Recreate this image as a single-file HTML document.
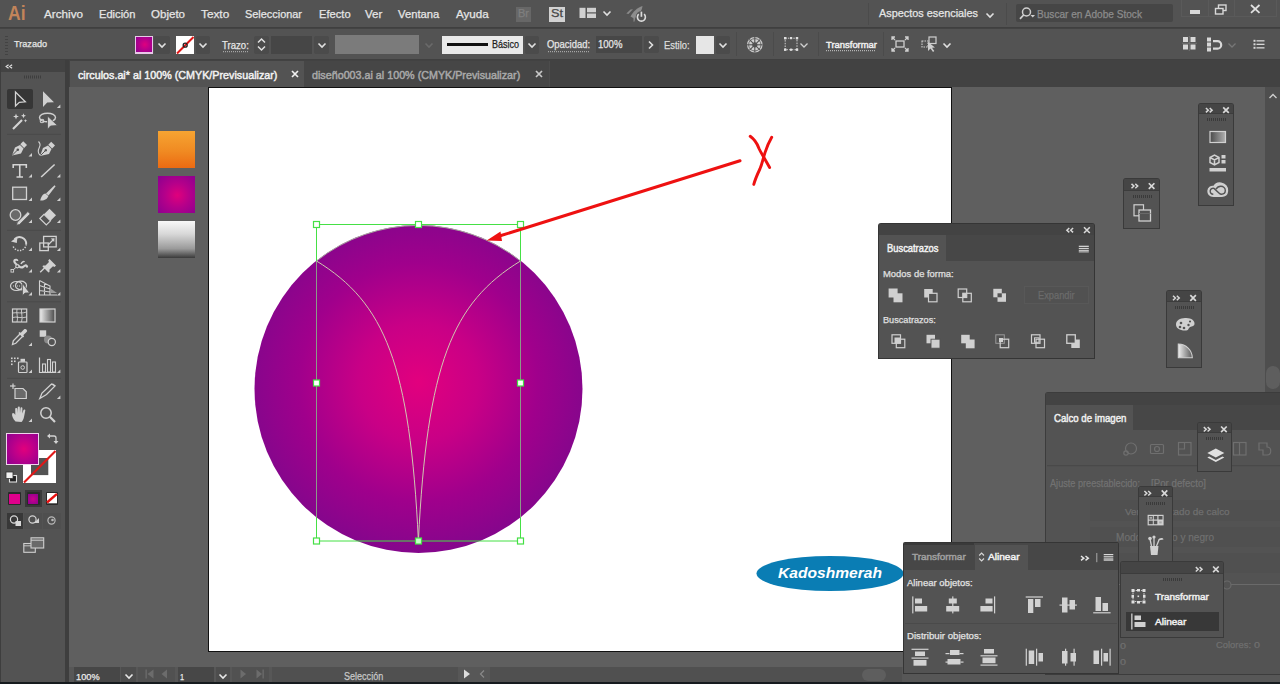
<!DOCTYPE html><html><head><meta charset="utf-8"><style>
html,body{margin:0;padding:0;width:1280px;height:684px;overflow:hidden;background:#5f5f5f;position:relative}
body{font-family:"Liberation Sans",sans-serif}
svg{position:absolute;overflow:visible}
</style></head><body>
<div style="position:absolute;left:0px;top:0px;width:1280px;height:28px;background:#535353;"></div>
<div style="position:absolute;left:0px;top:27px;width:1280px;height:1px;background:#3f3f3f;"></div>
<div style="position:absolute;left:0px;top:28px;width:1280px;height:32px;background:#535353;"></div>
<div style="position:absolute;left:0px;top:28px;width:1280px;height:1px;background:#434343;"></div>
<div style="position:absolute;left:0px;top:59px;width:1280px;height:1px;background:#404040;"></div>
<div style="position:absolute;left:0px;top:60px;width:69px;height:624px;background:#3e3e3e;"></div>
<div style="position:absolute;left:1px;top:60px;width:64px;height:622px;background:#535353;"></div>
<div style="position:absolute;left:1px;top:60px;width:64px;height:12px;background:#434343;"></div>
<div style="position:absolute;left:69px;top:60px;width:1211px;height:27px;background:#424242;"></div>
<div style="position:absolute;left:70px;top:61px;width:234px;height:26px;background:#535353;"></div>
<div style="position:absolute;left:304px;top:61px;width:245px;height:26px;background:#464646;"></div>
<div style="position:absolute;left:549px;top:61px;width:1px;height:26px;background:#4c4c4c;"></div>
<div style="position:absolute;left:69px;top:87px;width:1197px;height:580px;background:#5f5f5f;"></div>
<div style="position:absolute;left:1265px;top:87px;width:15px;height:580px;background:#4e4e4e;"></div>
<div style="position:absolute;left:1266px;top:365.8px;width:14px;height:23px;background:#5e5e5e;border-radius:7px"></div>
<svg style="left:1268px;top:93px;" width="10" height="7" viewBox="0 0 10 7"><polyline points="1.5,5 5,1.5 8.5,5" fill="none" stroke="#cfcfcf" stroke-width="1.3"/></svg>
<div style="position:absolute;left:208px;top:87px;width:744px;height:565px;background:#111111;"></div>
<div style="position:absolute;left:209px;top:88px;width:742px;height:563px;background:#ffffff;"></div>
<div style="position:absolute;left:69px;top:667px;width:1211px;height:15px;background:#575757;"></div>
<div style="position:absolute;left:0px;top:682px;width:1280px;height:2px;background:#161b1e;"></div>
<div style="position:absolute;left:43.50px;top:8.43px;font:normal normal 11.660px/1 'Liberation Sans', sans-serif;color:#e6e6e6;white-space:nowrap;-webkit-text-stroke:0.25px currentColor;transform:scaleX(1.0034);transform-origin:0 0;">Archivo</div>
<div style="position:absolute;left:98.50px;top:8.43px;font:normal normal 11.660px/1 'Liberation Sans', sans-serif;color:#e6e6e6;white-space:nowrap;-webkit-text-stroke:0.25px currentColor;transform:scaleX(0.9547);transform-origin:0 0;">Edición</div>
<div style="position:absolute;left:150.90px;top:8.43px;font:normal normal 11.660px/1 'Liberation Sans', sans-serif;color:#e6e6e6;white-space:nowrap;-webkit-text-stroke:0.25px currentColor;transform:scaleX(0.9900);transform-origin:0 0;">Objeto</div>
<div style="position:absolute;left:201.30px;top:8.43px;font:normal normal 11.660px/1 'Liberation Sans', sans-serif;color:#e6e6e6;white-space:nowrap;-webkit-text-stroke:0.25px currentColor;transform:scaleX(1.0122);transform-origin:0 0;">Texto</div>
<div style="position:absolute;left:245.40px;top:8.43px;font:normal normal 11.660px/1 'Liberation Sans', sans-serif;color:#e6e6e6;white-space:nowrap;-webkit-text-stroke:0.25px currentColor;transform:scaleX(0.9359);transform-origin:0 0;">Seleccionar</div>
<div style="position:absolute;left:318.90px;top:8.43px;font:normal normal 11.660px/1 'Liberation Sans', sans-serif;color:#e6e6e6;white-space:nowrap;-webkit-text-stroke:0.25px currentColor;transform:scaleX(0.9563);transform-origin:0 0;">Efecto</div>
<div style="position:absolute;left:365.30px;top:8.43px;font:normal normal 11.660px/1 'Liberation Sans', sans-serif;color:#e6e6e6;white-space:nowrap;-webkit-text-stroke:0.25px currentColor;transform:scaleX(0.9831);transform-origin:0 0;">Ver</div>
<div style="position:absolute;left:398.20px;top:8.43px;font:normal normal 11.660px/1 'Liberation Sans', sans-serif;color:#e6e6e6;white-space:nowrap;-webkit-text-stroke:0.25px currentColor;transform:scaleX(0.9653);transform-origin:0 0;">Ventana</div>
<div style="position:absolute;left:455.50px;top:8.43px;font:normal normal 11.660px/1 'Liberation Sans', sans-serif;color:#e6e6e6;white-space:nowrap;-webkit-text-stroke:0.25px currentColor;transform:scaleX(0.9957);transform-origin:0 0;">Ayuda</div>
<div style="position:absolute;left:7.50px;top:2.78px;font:normal bold 20.576px/1 'Liberation Sans', sans-serif;color:#c2845a;white-space:nowrap;transform:scaleX(0.8511);transform-origin:0 0;">Ai</div>
<div style="position:absolute;left:515.6px;top:6.5px;width:15.5px;height:15px;background:#676767;"></div>
<div style="position:absolute;left:517.80px;top:9.09px;font:normal normal 10.288px/1 'Liberation Sans', sans-serif;color:#7f7f7f;white-space:nowrap;-webkit-text-stroke:0.25px currentColor;transform:scaleX(1.0715);transform-origin:0 0;">Br</div>
<div style="position:absolute;left:549px;top:6.5px;width:16px;height:15px;background:#d2d2d2;"></div>
<div style="position:absolute;left:551.00px;top:9.09px;font:normal normal 10.288px/1 'Liberation Sans', sans-serif;color:#484848;white-space:nowrap;-webkit-text-stroke:0.25px currentColor;transform:scaleX(1.2372);transform-origin:0 0;">St</div>
<svg style="left:579px;top:7px;" width="18" height="12" viewBox="0 0 18 12"><rect x="0.5" y="0.8" width="6" height="10.2" fill="#d0d0d0"/><rect x="8" y="0.8" width="9" height="4.5" fill="#d0d0d0"/><rect x="8" y="6.5" width="9" height="4.5" fill="#d0d0d0"/></svg>
<svg style="left:602px;top:10px;" width="10" height="7" viewBox="0 0 10 7"><polyline points="1.5,1.5 5,5 8.5,1.5" fill="none" stroke="#e0e0e0" stroke-width="1.6"/></svg>
<svg style="left:620px;top:2px;" width="32" height="24" viewBox="0 0 32 24"><path d="M10.5,14.5 C13,10 17,5.5 22.5,4 C22,9 18.5,13.5 14,16.5Z" fill="#8c8c8c"/><path d="M6.3,11.6 L10.5,7.5 L13,7.3 L8.5,12Z" fill="#8a8a8a"/><path d="M13.5,15.5 L15.5,14.5 L14.5,19.5 L13.5,19.8Z" fill="#8a8a8a"/><circle cx="21.4" cy="14.7" r="5.6" fill="#535353"/><path d="M18.7,12.2 A4,4 0 1 0 24.1,12.2" fill="none" stroke="#dcdcdc" stroke-width="1.6"/><line x1="21.4" y1="9.6" x2="21.4" y2="14.8" stroke="#dcdcdc" stroke-width="1.7"/></svg>
<div style="position:absolute;left:868px;top:3px;width:1px;height:22px;background:#4b4b4b;"></div>
<div style="position:absolute;left:1006px;top:3px;width:1px;height:22px;background:#4b4b4b;"></div>
<div style="position:absolute;left:878.90px;top:7.96px;font:normal normal 11.385px/1 'Liberation Sans', sans-serif;color:#e6e6e6;white-space:nowrap;-webkit-text-stroke:0.25px currentColor;transform:scaleX(0.9547);transform-origin:0 0;">Aspectos esenciales</div>
<svg style="left:985px;top:12px;" width="10" height="7" viewBox="0 0 10 7"><polyline points="1.5,1.5 5,5 8.5,1.5" fill="none" stroke="#e0e0e0" stroke-width="1.6"/></svg>
<div style="position:absolute;left:1016px;top:4.3px;width:157px;height:18px;background:#464646;border-radius:2px"></div>
<svg style="left:1018px;top:6px;" width="18" height="14" viewBox="0 0 18 14"><circle cx="8.5" cy="6" r="4" fill="none" stroke="#d0d0d0" stroke-width="1.5"/><line x1="5.6" y1="9" x2="2" y2="12.8" stroke="#d0d0d0" stroke-width="1.8"/><polygon points="12.5,9 17,9 14.75,11.5" fill="#d0d0d0"/></svg>
<div style="position:absolute;left:1036.50px;top:8.51px;font:normal normal 10.974px/1 'Liberation Sans', sans-serif;color:#8c8c8c;white-space:nowrap;-webkit-text-stroke:0.25px currentColor;transform:scaleX(0.9203);transform-origin:0 0;">Buscar en Adobe Stock</div>
<div style="position:absolute;left:1181px;top:0px;width:96px;height:17px;background:#5a5a5a;"></div>
<div style="position:absolute;left:1182px;top:0px;width:94px;height:16px;background:#535353;"></div>
<div style="position:absolute;left:1208px;top:0px;width:1px;height:17px;background:#5a5a5a;"></div>
<div style="position:absolute;left:1234px;top:0px;width:1px;height:17px;background:#5a5a5a;"></div>
<div style="position:absolute;left:1190px;top:10.3px;width:9.5px;height:3.4px;background:#d8d8d8;"></div>
<svg style="left:1214px;top:4px;" width="14" height="11" viewBox="0 0 14 11"><rect x="4.5" y="1" width="7.5" height="5.5" fill="none" stroke="#d8d8d8" stroke-width="1.4"/><rect x="1.5" y="4.5" width="7.5" height="5.5" fill="#4f4f4f" stroke="#d8d8d8" stroke-width="1.4"/></svg>
<svg style="left:1250px;top:4px;" width="11" height="10" viewBox="0 0 11 10"><path d="M1,1 L9.5,8.8 M9.5,1 L1,8.8" stroke="#e0e0e0" stroke-width="1.8"/></svg>
<div style="position:absolute;left:5px;top:36px;width:2.5px;height:1.3px;background:#434343;"></div>
<div style="position:absolute;left:5px;top:39px;width:2.5px;height:1.3px;background:#434343;"></div>
<div style="position:absolute;left:5px;top:42px;width:2.5px;height:1.3px;background:#434343;"></div>
<div style="position:absolute;left:5px;top:45px;width:2.5px;height:1.3px;background:#434343;"></div>
<div style="position:absolute;left:5px;top:48px;width:2.5px;height:1.3px;background:#434343;"></div>
<div style="position:absolute;left:5px;top:51px;width:2.5px;height:1.3px;background:#434343;"></div>
<div style="position:absolute;left:5px;top:54px;width:2.5px;height:1.3px;background:#434343;"></div>
<div style="position:absolute;left:13.50px;top:39.06px;font:normal normal 9.739px/1 'Liberation Sans', sans-serif;color:#e6e6e6;white-space:nowrap;-webkit-text-stroke:0.25px currentColor;transform:scaleX(0.9407);transform-origin:0 0;">Trazado</div>
<div style="position:absolute;left:134.6px;top:35.5px;width:18.6px;height:18.3px;background:#e8c8e8;"></div>
<div style="position:absolute;left:136px;top:37px;width:15.8px;height:15.3px;background:radial-gradient(circle at 55% 50%, #e0007e 0%, #b8008a 45%, #90008f 100%);"></div>
<div style="position:absolute;left:154.4px;top:35.5px;width:15.4px;height:18.3px;background:#4b4b4b;border-radius:2px"></div>
<svg style="left:157px;top:42px;" width="10" height="7" viewBox="0 0 10 7"><polyline points="1.5,1.5 5,5 8.5,1.5" fill="none" stroke="#e0e0e0" stroke-width="1.6"/></svg>
<div style="position:absolute;left:175.8px;top:35.5px;width:18.4px;height:18.3px;background:#ffffff;"></div>
<svg style="left:175.8px;top:35.5px;" width="18.4" height="18.3" viewBox="0 0 18.4 18.3"><line x1="1" y1="17.5" x2="17.5" y2="1" stroke="#e01818" stroke-width="2"/><circle cx="9.2" cy="9.2" r="2" fill="none" stroke="#222" stroke-width="1.3"/></svg>
<div style="position:absolute;left:195.6px;top:35.5px;width:14.6px;height:18.3px;background:#4b4b4b;border-radius:2px"></div>
<svg style="left:198px;top:42px;" width="10" height="7" viewBox="0 0 10 7"><polyline points="1.5,1.5 5,5 8.5,1.5" fill="none" stroke="#e0e0e0" stroke-width="1.6"/></svg>
<div style="position:absolute;left:222.20px;top:40.61px;font:normal normal 10.151px/1 'Liberation Sans', sans-serif;color:#e6e6e6;white-space:nowrap;-webkit-text-stroke:0.25px currentColor;transform:scaleX(0.9449);transform-origin:0 0;">Trazo:</div>
<svg style="left:222.7px;top:51px;" width="26" height="2" viewBox="0 0 26 2"><line x1="0" y1="0.7" x2="26" y2="0.7" stroke="#bbbbbb" stroke-width="1" stroke-dasharray="1,1"/></svg>
<div style="position:absolute;left:254px;top:35.5px;width:15px;height:18.3px;background:#4b4b4b;border-radius:2px"></div>
<svg style="left:256px;top:37px;" width="11" height="15" viewBox="0 0 11 15"><polyline points="2,5.5 5.5,2 9,5.5" fill="none" stroke="#e0e0e0" stroke-width="1.5"/><polyline points="2,9.5 5.5,13 9,9.5" fill="none" stroke="#e0e0e0" stroke-width="1.5"/></svg>
<div style="position:absolute;left:270.9px;top:35.5px;width:41px;height:18.3px;background:#464646;"></div>
<div style="position:absolute;left:313.8px;top:35.5px;width:15px;height:18.3px;background:#4b4b4b;border-radius:2px"></div>
<svg style="left:316.5px;top:42px;" width="10" height="7" viewBox="0 0 10 7"><polyline points="1.5,1.5 5,5 8.5,1.5" fill="none" stroke="#e0e0e0" stroke-width="1.6"/></svg>
<div style="position:absolute;left:335px;top:35px;width:84px;height:19.4px;background:#7b7b7b;"></div>
<svg style="left:424px;top:42px;" width="10" height="7" viewBox="0 0 10 7"><polyline points="1.5,1.5 5,5 8.5,1.5" fill="none" stroke="#6a6a6a" stroke-width="1.6"/></svg>
<div style="position:absolute;left:442.3px;top:35.9px;width:81px;height:18px;background:#e9e9e9;"></div>
<div style="position:absolute;left:446.8px;top:43.2px;width:41.7px;height:3px;background:#111111;"></div>
<div style="position:absolute;left:492.10px;top:39.05px;font:normal normal 11.523px/1 'Liberation Sans', sans-serif;color:#1c1c1c;white-space:nowrap;-webkit-text-stroke:0.25px currentColor;transform:scaleX(0.7812);transform-origin:0 0;">Básico</div>
<div style="position:absolute;left:525px;top:35.5px;width:14.3px;height:18.3px;background:#4b4b4b;border-radius:2px"></div>
<svg style="left:527px;top:42px;" width="10" height="7" viewBox="0 0 10 7"><polyline points="1.5,1.5 5,5 8.5,1.5" fill="none" stroke="#e0e0e0" stroke-width="1.6"/></svg>
<div style="position:absolute;left:547.00px;top:39.21px;font:normal normal 10.974px/1 'Liberation Sans', sans-serif;color:#e6e6e6;white-space:nowrap;-webkit-text-stroke:0.25px currentColor;transform:scaleX(0.8600);transform-origin:0 0;">Opacidad:</div>
<svg style="left:547.5px;top:50.5px;" width="42" height="2" viewBox="0 0 42 2"><line x1="0" y1="0.7" x2="42" y2="0.7" stroke="#bbbbbb" stroke-width="1" stroke-dasharray="1,1"/></svg>
<div style="position:absolute;left:596px;top:36px;width:46px;height:17px;background:#474747;"></div>
<div style="position:absolute;left:597.90px;top:39.21px;font:normal normal 10.974px/1 'Liberation Sans', sans-serif;color:#e8e8e8;white-space:nowrap;-webkit-text-stroke:0.25px currentColor;transform:scaleX(0.8698);transform-origin:0 0;">100%</div>
<div style="position:absolute;left:644.2px;top:36px;width:14.4px;height:17px;background:#4b4b4b;border-radius:2px"></div>
<svg style="left:647px;top:40px;" width="8" height="10" viewBox="0 0 8 10"><polyline points="2,1.5 5.5,5 2,8.5" fill="none" stroke="#e0e0e0" stroke-width="1.6"/></svg>
<div style="position:absolute;left:664.40px;top:39.74px;font:normal normal 10.700px/1 'Liberation Sans', sans-serif;color:#dcdcdc;white-space:nowrap;-webkit-text-stroke:0.25px currentColor;transform:scaleX(0.8796);transform-origin:0 0;">Estilo:</div>
<div style="position:absolute;left:696px;top:35.9px;width:18px;height:18px;background:#e6e6e6;"></div>
<div style="position:absolute;left:715.7px;top:35.5px;width:14px;height:18.3px;background:#4b4b4b;border-radius:2px"></div>
<svg style="left:718px;top:42px;" width="10" height="7" viewBox="0 0 10 7"><polyline points="1.5,1.5 5,5 8.5,1.5" fill="none" stroke="#e0e0e0" stroke-width="1.6"/></svg>
<div style="position:absolute;left:736px;top:32px;width:1px;height:24px;background:#4b4b4b;"></div>
<svg style="left:746px;top:36px;" width="18" height="18" viewBox="0 0 18 18"><circle cx="8.8" cy="8.8" r="7.8" fill="#cfcfcf"/><circle cx="8.8" cy="8.8" r="2.6" fill="#535353"/><g stroke="#535353" stroke-width="1.1"><line x1="8.8" y1="1" x2="8.8" y2="16.6"/><line x1="1" y1="8.8" x2="16.6" y2="8.8"/><line x1="3.3" y1="3.3" x2="14.3" y2="14.3"/><line x1="14.3" y1="3.3" x2="3.3" y2="14.3"/></g><circle cx="8.8" cy="8.8" r="6.2" fill="none" stroke="#535353" stroke-width="0.8"/></svg>
<div style="position:absolute;left:772.6px;top:32px;width:1px;height:24px;background:#4b4b4b;"></div>
<svg style="left:784px;top:37px;" width="15" height="14" viewBox="0 0 15 14"><rect x="1.2" y="1.2" width="11.8" height="11.5" fill="none" stroke="#d0d0d0" stroke-width="1" stroke-dasharray="1.5,1.2"/><g fill="#e0e0e0"><rect x="0" y="0" width="2.4" height="2.4"/><rect x="11.8" y="0" width="2.4" height="2.4"/><rect x="0" y="11.5" width="2.4" height="2.4"/><rect x="11.8" y="11.5" width="2.4" height="2.4"/><rect x="6" y="0" width="2.2" height="2.2"/><rect x="6" y="11.6" width="2.2" height="2.2"/></g></svg>
<svg style="left:799px;top:42px;" width="10" height="7" viewBox="0 0 10 7"><polyline points="1.5,1.5 5,5 8.5,1.5" fill="none" stroke="#d0d0d0" stroke-width="1.3"/></svg>
<div style="position:absolute;left:817.5px;top:32px;width:1px;height:24px;background:#4b4b4b;"></div>
<div style="position:absolute;left:825.50px;top:40.14px;font:normal normal 9.877px/1 'Liberation Sans', sans-serif;color:#f0f0f0;white-space:nowrap;-webkit-text-stroke:0.45px currentColor;transform:scaleX(0.9565);transform-origin:0 0;">Transformar</div>
<svg style="left:826px;top:50px;" width="50" height="2" viewBox="0 0 50 2"><line x1="0" y1="0.7" x2="50" y2="0.7" stroke="#cccccc" stroke-width="1" stroke-dasharray="1,1"/></svg>
<div style="position:absolute;left:883px;top:32px;width:1px;height:24px;background:#4b4b4b;"></div>
<svg style="left:891px;top:36px;" width="18" height="16" viewBox="0 0 18 16"><rect x="5" y="5" width="8" height="6" fill="none" stroke="#d0d0d0" stroke-width="1.3"/><g stroke="#d0d0d0" stroke-width="1.3" fill="none"><path d="M1,1 L4,4 M1,4 L1,1 L4,1"/><path d="M17,1 L14,4 M17,4 L17,1 L14,1"/><path d="M1,15 L4,12 M1,12 L1,15 L4,15"/><path d="M17,15 L14,12 M17,12 L17,15 L14,15"/></g></svg>
<svg style="left:921px;top:36px;" width="18" height="16" viewBox="0 0 18 16"><rect x="1" y="5" width="6" height="6" fill="none" stroke="#cfcfcf" stroke-width="1.1" stroke-dasharray="1.5,1"/><rect x="8" y="1" width="7" height="6.5" fill="none" stroke="#cfcfcf" stroke-width="1.2"/><path d="M7,6 L7,15 L9.5,12.5 L12,16 L13.3,15 L11,11.7 L14,11.5 Z" fill="#cfcfcf"/></svg>
<svg style="left:942px;top:42px;" width="10" height="7" viewBox="0 0 10 7"><polyline points="1.5,1.5 5,5 8.5,1.5" fill="none" stroke="#e0e0e0" stroke-width="1.6"/></svg>
<svg style="left:1182px;top:36px;" width="15" height="15" viewBox="0 0 15 15"><g fill="#d8d8d8"><rect x="1" y="1" width="5" height="5"/><rect x="8.5" y="1" width="5" height="5"/><rect x="1" y="8.5" width="5" height="5"/><rect x="8.5" y="8.5" width="5" height="5"/></g><line x1="7.25" y1="0" x2="7.25" y2="15" stroke="#7a7a7a" stroke-width="0.8"/><line x1="0" y1="7.25" x2="15" y2="7.25" stroke="#7a7a7a" stroke-width="0.8"/></svg>
<svg style="left:1206px;top:37px;" width="17" height="15" viewBox="0 0 17 15"><g fill="#d8d8d8"><rect x="1" y="0.5" width="4" height="4"/><rect x="1" y="5.5" width="4" height="4"/><rect x="1" y="10.5" width="4" height="4"/></g><path d="M7,4.2 L11.5,4.2 A3.7,3.7 0 0 1 11.5,11.6 L7,11.6" fill="none" stroke="#d8d8d8" stroke-width="2.2"/></svg>
<svg style="left:1227px;top:42px;" width="10" height="7" viewBox="0 0 10 7"><polyline points="1.5,1.5 5,5 8.5,1.5" fill="none" stroke="#777777" stroke-width="1.3"/></svg>
<svg style="left:1253px;top:39px;" width="12" height="11" viewBox="0 0 12 11"><g fill="#d8d8d8"><rect x="0.5" y="0.8" width="2" height="2"/><rect x="0.5" y="4.3" width="2" height="2"/><rect x="0.5" y="7.8" width="2" height="2"/><rect x="3.5" y="1.2" width="8" height="1.3"/><rect x="3.5" y="4.7" width="8" height="1.3"/><rect x="3.5" y="8.2" width="8" height="1.3"/></g></svg>
<div style="position:absolute;left:77.50px;top:70.06px;font:normal normal 10.562px/1 'Liberation Sans', sans-serif;color:#f2f2f2;white-space:nowrap;-webkit-text-stroke:0.45px currentColor;transform:scaleX(1.0186);transform-origin:0 0;">circulos.ai* al 100% (CMYK/Previsualizar)</div>
<svg style="left:290.5px;top:69.5px;" width="8" height="8" viewBox="0 0 8 8"><path d="M1,1 L7,7 M7,1 L1,7" stroke="#f0f0f0" stroke-width="1.7"/></svg>
<div style="position:absolute;left:312.30px;top:70.06px;font:normal normal 10.562px/1 'Liberation Sans', sans-serif;color:#a9a9a9;white-space:nowrap;-webkit-text-stroke:0.45px currentColor;transform:scaleX(1.0177);transform-origin:0 0;">diseño003.ai al 100% (CMYK/Previsualizar)</div>
<svg style="left:534.5px;top:69.5px;" width="8" height="8" viewBox="0 0 8 8"><path d="M1,1 L7,7 M7,1 L1,7" stroke="#c8c8c8" stroke-width="1.7"/></svg>
<div style="position:absolute;left:5.10px;top:64.14px;font:normal normal 4.801px/1 'Liberation Sans', sans-serif;color:#ccc;white-space:nowrap;-webkit-text-stroke:0.25px currentColor;"></div>
<svg style="left:0px;top:0px;" width="69" height="684" viewBox="0 0 69 684">
<path d="M8.6,64.8 L6.2,66.5 L8.6,68.2 M12.1,64.8 L9.7,66.5 L12.1,68.2" fill="none" stroke="#e0e0e0" stroke-width="1.2"/>
<g fill="#3e3e3e"><rect x="24" y="75.5" width="1" height="3"/><rect x="26" y="75.5" width="1" height="3"/><rect x="28" y="75.5" width="1" height="3"/><rect x="30" y="75.5" width="1" height="3"/><rect x="32" y="75.5" width="1" height="3"/><rect x="34" y="75.5" width="1" height="3"/><rect x="36" y="75.5" width="1" height="3"/><rect x="38" y="75.5" width="1" height="3"/><rect x="40" y="75.5" width="1" height="3"/></g>
</svg>
<div style="position:absolute;left:7px;top:88.5px;width:25.8px;height:20.2px;background:#363636;border-radius:2px"></div>
<svg style="left:0px;top:0px;" width="69" height="684" viewBox="0 0 69 684"><g fill="#cfcfcf"><polygon points="32,153.0 32,156.5 28.5,156.5"/><polygon points="32,174.0 32,177.5 28.5,177.5"/><polygon points="32,197.5 32,201 28.5,201"/><polygon points="32,219.5 32,223 28.5,223"/><polygon points="32,247.5 32,251 28.5,251"/><polygon points="32,269.0 32,272.5 28.5,272.5"/><polygon points="32,292.0 32,295.5 28.5,295.5"/><polygon points="32,342.5 32,346 28.5,346"/><polygon points="32,369.5 32,373 28.5,373"/><polygon points="32,418.5 32,422 28.5,422"/><polygon points="60.4,104.5 60.4,108 56.9,108"/><polygon points="60.4,174.0 60.4,177.5 56.9,177.5"/><polygon points="60.4,197.5 60.4,201 56.9,201"/><polygon points="60.4,219.5 60.4,223 56.9,223"/><polygon points="60.4,247.5 60.4,251 56.9,251"/><polygon points="60.4,269.0 60.4,272.5 56.9,272.5"/><polygon points="60.4,292.0 60.4,295.5 56.9,295.5"/><polygon points="60.4,369.5 60.4,373 56.9,373"/><polygon points="60.4,395.5 60.4,399 56.9,399"/></g><rect x="7" y="133.9" width="54" height="1" fill="#4b4b4b"/><rect x="7" y="229.9" width="54" height="1" fill="#4b4b4b"/><rect x="7" y="301.3" width="54" height="1" fill="#4b4b4b"/><rect x="7" y="377.9" width="54" height="1" fill="#4b4b4b"/>
<polygon points="15.5,92 15.5,106 19.3,102.3 25.3,101.8" fill="none" stroke="#d4d4d4" stroke-width="1.3" stroke-linejoin="miter"/>
<polygon points="43,91.3 43,107 47.2,102.6 54,102.3" fill="#d0d0d0"/>
<g stroke="#d4d4d4" fill="none">
 <line x1="13" y1="129" x2="22" y2="120" stroke-width="2.2"/>
</g>
<g fill="#d4d4d4">
 <path d="M16,113.5 L16.8,115.7 L19,116.5 L16.8,117.3 L16,119.5 L15.2,117.3 L13,116.5 L15.2,115.7Z"/>
 <path d="M23.5,113.2 L24.2,115 L26,115.7 L24.2,116.4 L23.5,118.2 L22.8,116.4 L21,115.7 L22.8,115Z"/>
 <path d="M25.5,119 L26,120.3 L27.3,120.8 L26,121.3 L25.5,122.6 L25,121.3 L23.7,120.8 L25,120.3Z"/>
</g>
<ellipse cx="47.5" cy="117.5" rx="8" ry="4.3" fill="none" stroke="#d0d0d0" stroke-width="1.4"/>
<circle cx="42" cy="121" r="1.8" fill="none" stroke="#d0d0d0" stroke-width="1.1"/>
<polygon points="47.5,116 47.5,129.5 50.5,126 57.5,125.5" fill="#d0d0d0" stroke="#535353" stroke-width="0.8"/>
<path d="M12,155.5 L15,147.5 L20,145 L23.5,148.5 L21,153.5 Z" fill="#d2d2d2"/>
<path d="M20.3,144.3 L23.2,141.3 L27,145.1 L24.1,148" fill="#d2d2d2"/>
<line x1="12.3" y1="155.2" x2="17.3" y2="150.2" stroke="#535353" stroke-width="1"/>
<circle cx="17.8" cy="149.7" r="1.3" fill="#535353"/>
<path d="M40,156 L43,148 L48,145.5 L51.5,149 L49,154 Z" fill="#d2d2d2"/><line x1="40.3" y1="155.7" x2="45.3" y2="150.7" stroke="#535353" stroke-width="1"/><circle cx="45.8" cy="150.2" r="1.2" fill="#535353"/>
<path d="M48.3,144.8 L51.2,141.8 L55,145.6 L52.1,148.5Z" fill="#d2d2d2"/>
<path d="M40.5,155.5 C37,153 38.5,149 39.5,147 C40.5,145 39.5,142.5 38.5,141.5" fill="none" stroke="#d2d2d2" stroke-width="1.1"/>
<path d="M13.2,168 L13.2,164.8 L26.3,164.8 L26.3,168 M19.75,164.8 L19.75,177 M16.5,177 L23,177" fill="none" stroke="#d4d4d4" stroke-width="1.6"/>
<line x1="41.2" y1="177" x2="54.6" y2="164.5" stroke="#d2d2d2" stroke-width="1.6"/>
<rect x="12.7" y="187.2" width="13.8" height="12.3" fill="#656565" stroke="#d2d2d2" stroke-width="1.3"/>
<path d="M46,193.5 L54.5,185.2 L55.6,186.3 L48.5,195.5Z" fill="#d2d2d2"/>
<path d="M40.2,200.5 C41,197 42.5,194 45.5,193.5 L48.3,196 C47.5,199 44,201 40.2,200.5Z" fill="#d2d2d2"/>
<circle cx="15.5" cy="215" r="5.3" fill="#6a6a6a" stroke="#d2d2d2" stroke-width="1.3"/>
<path d="M17.2,222.2 L27.9,211.5 L30.3,213.9 L19.6,224.6 L16.5,225.2Z" fill="#d2d2d2" stroke="#535353" stroke-width="0.9"/>
<path d="M44,214.3 L49.5,208.8 L56,215.3 L50.5,220.8Z" fill="#d2d2d2"/>
<path d="M44,214.3 L50.5,220.8 L46.3,225 L39.8,218.5Z" fill="none" stroke="#d2d2d2" stroke-width="1.2"/>
<path d="M14.5,239.2 A6.8,6.8 0 0 1 26.2,244.2" fill="none" stroke="#d2d2d2" stroke-width="1.9"/>
<path d="M26.2,244.2 A6.8,6.8 0 0 1 12.8,245.3" fill="none" stroke="#d2d2d2" stroke-width="1.5" stroke-dasharray="1.4,1.3"/>
<polygon points="11,241.5 17.5,236.8 16.8,243" fill="#d2d2d2"/>
<rect x="39.8" y="243" width="8.5" height="7.6" fill="none" stroke="#d2d2d2" stroke-width="1.3"/>
<rect x="43.6" y="236.4" width="12.6" height="10.5" fill="none" stroke="#d2d2d2" stroke-width="1.3"/>
<line x1="48" y1="245" x2="53.5" y2="239.5" stroke="#d2d2d2" stroke-width="1.2"/>
<polygon points="54.5,238.3 50.8,238.6 54.2,242" fill="#d2d2d2"/>
<path d="M14.5,260.5 C13.5,262.5 16,264 18,265.5 C20,267 21,268.5 23,267 C24.5,265.8 25.5,264.5 27,266.5" fill="none" stroke="#d2d2d2" stroke-width="2.2" stroke-linecap="round"/>
<path d="M14.5,260.5 C15.5,259 17.5,259.5 17.5,261" fill="none" stroke="#d2d2d2" stroke-width="1.8"/>
<path d="M21,264 C22,262 23.5,261 24.5,262" fill="none" stroke="#d2d2d2" stroke-width="1.5"/>
<line x1="12.5" y1="270.5" x2="17" y2="266.5" stroke="#d2d2d2" stroke-width="1"/>
<circle cx="17.3" cy="266.3" r="1.6" fill="#535353" stroke="#d2d2d2" stroke-width="1.1"/>
<rect x="11" y="269.5" width="2.6" height="2.6" fill="#535353" stroke="#d2d2d2" stroke-width="0.9"/>
<path d="M49.5,259 L56,265.5 L54.5,267 L53,266.2 L49.5,269.5 L49.5,272 L48.5,272.5 L42.5,266.5 L43,265.5 L45.5,265.5 L49,262 L48.2,260.5Z" fill="#d2d2d2"/>
<line x1="40.2" y1="272.3" x2="45.3" y2="267.3" stroke="#d2d2d2" stroke-width="1.4"/>
<ellipse cx="16.5" cy="286" rx="6" ry="4.5" fill="none" stroke="#d2d2d2" stroke-width="1.2"/>
<ellipse cx="21" cy="285.5" rx="5.5" ry="4.3" fill="none" stroke="#d2d2d2" stroke-width="1.2"/>
<line x1="13" y1="286" x2="21.5" y2="286" stroke="#d2d2d2" stroke-width="1" stroke-dasharray="1,1"/>
<polygon points="22.5,283.5 22.5,295.5 25,293 29.5,292.8" fill="#d2d2d2" stroke="#535353" stroke-width="0.7"/>
<path d="M39.5,280.5 L39.5,295 L57,295 M39.5,280.5 L50,286 L50,295 M39.5,285.5 L50,289 M39.5,290.5 L50,292 M44.5,282.8 L44.5,295" fill="none" stroke="#d2d2d2" stroke-width="1.1"/>
<path d="M50.5,288.5 L57,293 L50.5,293" fill="#9a9a9a"/>
<rect x="12.5" y="309" width="14.2" height="13" fill="none" stroke="#d2d2d2" stroke-width="1.2"/>
<path d="M12.5,313 C17,312 22,314 26.7,312 M12.5,317.5 C17,316 21,319 26.7,317 M17,309 C16,313 18.5,318 17,322 M21.5,309 C21,313 23,317 21.5,322" fill="none" stroke="#d2d2d2" stroke-width="0.9"/>
<defs><linearGradient id="tg" x1="0" x2="1" y1="0" y2="0"><stop offset="0" stop-color="#ececec"/><stop offset="1" stop-color="#4a4a4a"/></linearGradient></defs>
<rect x="40" y="309" width="15" height="13" fill="url(#tg)" stroke="#d2d2d2" stroke-width="1.2"/>
<path d="M12.5,344.5 L13.3,340.8 L20.5,333.5 L23,336 L15.8,343.3Z" fill="none" stroke="#d2d2d2" stroke-width="1.3"/>
<path d="M19.5,334 L24.2,329.3 C25.5,328.2 28,330.5 26.8,331.8 L22,336.5Z" fill="#d2d2d2"/><line x1="19" y1="332.5" x2="23.5" y2="337" stroke="#d2d2d2" stroke-width="1.6"/>
<rect x="39.7" y="330.3" width="6.5" height="6.5" fill="#d2d2d2"/>
<circle cx="48" cy="339.5" r="4" fill="#8a8a8a"/>
<circle cx="51.8" cy="342" r="3.6" fill="#535353" stroke="#d2d2d2" stroke-width="1.2"/>
<g fill="#d2d2d2"><rect x="11" y="357.5" width="1.6" height="1.6"/><rect x="14" y="357.5" width="1.6" height="1.6"/><rect x="17" y="357.5" width="1.6" height="1.6"/><rect x="11" y="360.5" width="1.6" height="1.6"/><rect x="14" y="360.5" width="1.6" height="1.6"/><rect x="11" y="363.5" width="1.6" height="1.6"/></g>
<rect x="18.5" y="362" width="8.5" height="10.5" fill="none" stroke="#d2d2d2" stroke-width="1.2" rx="0.8"/>
<rect x="20.5" y="358.8" width="4.5" height="3" fill="#d2d2d2"/>
<circle cx="22.7" cy="367.5" r="1.8" fill="none" stroke="#d2d2d2" stroke-width="1"/>
<path d="M39.5,357.5 L39.5,372.5 L56.3,372.5" fill="none" stroke="#d2d2d2" stroke-width="1.2"/>
<g fill="none" stroke="#d2d2d2" stroke-width="1.1"><rect x="42.5" y="364" width="3" height="8"/><rect x="47.5" y="359.5" width="3" height="12.5"/><rect x="52.5" y="362" width="3" height="10"/></g>
<line x1="10" y1="386" x2="15.5" y2="386" stroke="#d2d2d2" stroke-width="1.2"/>
<line x1="13" y1="383.5" x2="13" y2="389" stroke="#d2d2d2" stroke-width="1.2"/>
<path d="M15,388.5 L23,388.5 L26.3,391.8 L26.3,398.5 L15,398.5Z" fill="#6a6a6a" stroke="#d2d2d2" stroke-width="1.2"/>
<path d="M39.8,398.5 L42,393 L51.5,384 L55,386 L46.5,394.5Z" fill="none" stroke="#d2d2d2" stroke-width="1.3"/>
<path d="M51.5,384 L53,383.5 L55.5,385.5 L55,386Z" fill="#d2d2d2"/>
<path d="M15.5,421.5 C13,419 11.5,415.5 12.2,413.5 C12.8,412.3 14.5,413 15.3,415 L15.2,409 C15.2,407.6 17.2,407.6 17.3,409 L17.5,413 L17.8,407.3 C17.9,406.2 19.8,406.2 19.8,407.3 L20,413 L20.5,408 C20.6,406.9 22.4,407 22.4,408.2 L22.3,413.5 L23.5,410 C23.9,409 25.6,409.3 25.3,410.5 L24,417 C23.5,419.5 22.5,421 21.5,422Z" fill="#d2d2d2"/>
<circle cx="46" cy="413" r="5.2" fill="none" stroke="#d2d2d2" stroke-width="1.5"/>
<line x1="49.8" y1="416.8" x2="55" y2="422" stroke="#d2d2d2" stroke-width="2.2"/>
</svg>
<div style="position:absolute;left:5.7px;top:432.8px;width:33.6px;height:32.5px;background:#f0d4ec;"></div>
<div style="position:absolute;left:7.2px;top:434.3px;width:30.6px;height:29.5px;background:radial-gradient(circle at 55% 50%, #e2007c 0%, #c00089 40%, #8e0090 100%);"></div>
<div style="position:absolute;left:23px;top:449.6px;width:33.3px;height:33.1px;background:#ffffff;"></div>
<svg style="left:23px;top:449.6px;" width="34" height="34" viewBox="0 0 34 34"><rect x="8" y="8" width="17.3" height="17.1" fill="#535353"/><line x1="1" y1="32.5" x2="32.5" y2="1" stroke="#e01818" stroke-width="2.2"/></svg>
<div style="position:absolute;left:5.7px;top:432.8px;width:33.6px;height:32.5px;background:#f0d4ec;"></div>
<div style="position:absolute;left:7.2px;top:434.3px;width:30.6px;height:29.5px;background:radial-gradient(circle at 55% 50%, #e2007c 0%, #c00089 40%, #8e0090 100%);"></div>
<svg style="left:46px;top:433px;" width="13" height="12" viewBox="0 0 13 12"><path d="M2.5,3 L8,3 Q10,3 10,5 L10,9.5" fill="none" stroke="#d2d2d2" stroke-width="1.3"/><polygon points="1,3 4,0.5 4,5.5" fill="#d2d2d2"/><polygon points="10,11 7.5,8 12.5,8" fill="#d2d2d2"/></svg>
<svg style="left:5px;top:471px;" width="13" height="12" viewBox="0 0 13 12"><rect x="4.5" y="4.5" width="7" height="6.5" fill="#222" stroke="#e0e0e0" stroke-width="1.1"/><rect x="1" y="1" width="7" height="6.5" fill="#f2f2f2" stroke="#333" stroke-width="0.8"/></svg>
<div style="position:absolute;left:8.2px;top:492.3px;width:12.8px;height:12.5px;background:#2a2a2a;border-radius:1px"></div>
<div style="position:absolute;left:9.4px;top:493.5px;width:10.4px;height:10.1px;background:#e0008c;"></div>
<div style="position:absolute;left:24.8px;top:490.3px;width:17.1px;height:16.9px;background:#393939;"></div>
<div style="position:absolute;left:27.1px;top:492.3px;width:12.5px;height:12.5px;background:#2a2a2a;border-radius:1px"></div>
<div style="position:absolute;left:28.3px;top:493.5px;width:10.1px;height:10.1px;background:radial-gradient(circle, #cc008a, #8c0090);"></div>
<div style="position:absolute;left:45.9px;top:492.3px;width:12.1px;height:12.5px;background:#2a2a2a;border-radius:1px"></div>
<svg style="left:47px;top:493.4px;" width="10" height="10.3" viewBox="0 0 10 10.3"><rect width="10" height="10.3" fill="#fff"/><line x1="0" y1="9.5" x2="10" y2="0.8" stroke="#e81010" stroke-width="2.4"/></svg>
<div style="position:absolute;left:7.3px;top:513.4px;width:15.5px;height:15.2px;background:#383838;"></div>
<div style="position:absolute;left:24px;top:513.4px;width:17.5px;height:15.2px;background:#4f4f4f;"></div>
<div style="position:absolute;left:42.7px;top:513.4px;width:18.2px;height:15.2px;background:#4f4f4f;"></div>
<svg style="left:0px;top:0px;" width="69" height="684" viewBox="0 0 69 684">
<circle cx="14" cy="519.5" r="3.6" fill="none" stroke="#d8d8d8" stroke-width="1.2"/>
<rect x="15.5" y="521" width="5.5" height="5" fill="#d8d8d8"/>
<circle cx="32.5" cy="519.5" r="3.6" fill="none" stroke="#d2d2d2" stroke-width="1.2"/>
<path d="M34,523 L39,523 L39,518 Z" fill="#d2d2d2"/>
<circle cx="51.5" cy="520.5" r="3.6" fill="none" stroke="#b8b8b8" stroke-width="1.2"/>
<circle cx="52.5" cy="520" r="1.3" fill="#b8b8b8"/>
<rect x="23.8" y="543.5" width="11.5" height="8.8" fill="#5e5e5e" stroke="#cfcfcf" stroke-width="1.1"/>
<line x1="23.8" y1="545.8" x2="35.3" y2="545.8" stroke="#cfcfcf" stroke-width="0.9"/>
<rect x="31" y="537.8" width="12.7" height="10.2" fill="#6a6a6a" stroke="#cfcfcf" stroke-width="1.1"/>
<line x1="31" y1="540.2" x2="43.7" y2="540.2" stroke="#cfcfcf" stroke-width="1"/>
</svg>
<div style="position:absolute;left:158.3px;top:131.4px;width:37.1px;height:36.4px;background:linear-gradient(#f6a432,#f08a22 55%,#ec6a12);"></div>
<div style="position:absolute;left:158.3px;top:176px;width:37.1px;height:37.2px;background:radial-gradient(circle at 52% 52%, #e0007c 0%, #b5008a 45%, #8a0090 100%);"></div>
<div style="position:absolute;left:158.3px;top:220.9px;width:37.1px;height:36.8px;background:linear-gradient(#f8f8f8 0%,#d8d8d8 35%,#9a9a9a 75%,#3a3a3a 100%);"></div>
<svg style="left:0px;top:0px;" width="1280" height="684" viewBox="0 0 1280 684">
<defs>
<radialGradient id="cg" cx="418.5" cy="382" r="170" gradientUnits="userSpaceOnUse">
<stop offset="0" stop-color="#e2007e"/><stop offset="0.35" stop-color="#c90086"/><stop offset="0.7" stop-color="#a0008c"/><stop offset="1" stop-color="#85068c"/>
</radialGradient>
</defs>
<circle cx="418.5" cy="389" r="164" fill="url(#cg)"/>
<path d="M316.5,261 C384.9,302.8 409.9,364.1 418.4,541" fill="none" stroke="#cfc8b0" stroke-width="1"/>
<path d="M520.5,261 C452.1,302.8 427.1,364.1 418.4,541" fill="none" stroke="#cfc8b0" stroke-width="1"/>
<path d="M316.5,261 A164,164 0 0 1 520.5,261" fill="none" stroke="#a8a8a0" stroke-width="1"/>
<rect x="316.5" y="224.5" width="204" height="316.5" fill="none" stroke="#45e045" stroke-width="1"/>
<clipPath id="cc"><circle cx="418.5" cy="389" r="164"/></clipPath>
<g clip-path="url(#cc)" stroke="#8a9a88" stroke-width="1"><line x1="316.5" y1="224" x2="316.5" y2="541"/><line x1="520.5" y1="224" x2="520.5" y2="541"/></g>
<g fill="#ffffff" stroke="#45e045" stroke-width="1.2">
<rect x="313.5" y="221.5" width="6" height="6"/><rect x="415.5" y="221.5" width="6" height="6"/><rect x="517.5" y="221.5" width="6" height="6"/>
<rect x="313.5" y="380" width="6" height="6"/><rect x="517.5" y="380" width="6" height="6"/>
<rect x="313.5" y="538" width="6" height="6"/><rect x="415.5" y="538" width="6" height="6" fill="#c8ffc8"/><rect x="517.5" y="538" width="6" height="6"/>
</g>
<line x1="740" y1="160.8" x2="497" y2="236.8" stroke="#ee1111" stroke-width="3" stroke-linecap="round"/>
<polygon points="486.7,240.4 500.5,231.5 502,241" fill="#ee1111"/>
<path d="M750.2,136.3 C754,139 757,143 759,148.5 C761,153 765,159 769.6,167.5" fill="none" stroke="#ee1111" stroke-width="2.9" stroke-linecap="round"/>
<path d="M771.7,137.3 C769,142 766.5,148 765,152.6 C763.5,157 762.5,163 759.9,169 C757.5,174 755,180 753.8,184.4" fill="none" stroke="#ee1111" stroke-width="2.9" stroke-linecap="round"/>
<ellipse cx="830" cy="573.5" rx="73.5" ry="17.6" fill="#0a7db4"/>
</svg>
<div style="position:absolute;left:777.80px;top:567.39px;font:italic bold 13.717px/1 'Liberation Sans', sans-serif;color:#ffffff;white-space:nowrap;transform:scaleX(1.1381);transform-origin:0 0;">Kadoshmerah</div>
<div style="position:absolute;left:1045px;top:392px;width:235px;height:283px;background:#3c3c3c;border-radius:3px 0 0 0"></div>
<div style="position:absolute;left:1046px;top:393px;width:234px;height:281px;background:#535353;border-radius:2px 0 0 0"></div>
<div style="position:absolute;left:1046px;top:393px;width:234px;height:12px;background:#434343;"></div>
<div style="position:absolute;left:1046px;top:405px;width:234px;height:25px;background:#474747;"></div>
<div style="position:absolute;left:1046px;top:405px;width:87px;height:25px;background:#535353;"></div>
<div style="position:absolute;left:1053.50px;top:412.94px;font:normal normal 10.700px/1 'Liberation Sans', sans-serif;color:#f0f0f0;white-space:nowrap;-webkit-text-stroke:0.45px currentColor;transform:scaleX(0.9027);transform-origin:0 0;">Calco de imagen</div>
<svg style="left:0px;top:0px;" width="1280" height="684" viewBox="0 0 1280 684">
<g stroke="#6f6f6f" fill="none" stroke-width="1.2">
<circle cx="1131" cy="448.5" r="5.5"/><circle cx="1126" cy="453" r="2.2"/>
<rect x="1150.5" y="444.5" width="13" height="9" rx="1"/><circle cx="1157" cy="449" r="2.5"/>
<rect x="1178.5" y="442.5" width="12.5" height="12.5"/><path d="M1178.5,449 L1184.5,449 L1184.5,442.5"/>
<rect x="1233.5" y="442.5" width="12.5" height="12.5"/><line x1="1239.5" y1="442.5" x2="1239.5" y2="455"/>
<path d="M1259,443 L1267,443 L1267,447 C1272,447 1272,455 1267,455 L1263,455 L1263,450 L1259,450Z"/>
</g>
<rect x="1047" y="465.2" width="233" height="1" fill="#474747"/>
<rect x="1090" y="500" width="190" height="21" fill="#505050"/>
<rect x="1090" y="527" width="190" height="20" fill="#505050"/>
<rect x="1090" y="553" width="190" height="20" fill="#505050"/>
<rect x="1100" y="584" width="180" height="1" fill="#6a6a6a"/>
<circle cx="1227" cy="585" r="4" fill="#535353" stroke="#6a6a6a" stroke-width="1.2"/>
</svg>
<div style="position:absolute;left:1050.20px;top:479.32px;font:normal normal 10.014px/1 'Liberation Sans', sans-serif;color:#727272;white-space:nowrap;-webkit-text-stroke:0.25px currentColor;transform:scaleX(0.9147);transform-origin:0 0;">Ajuste preestablecido:</div>
<div style="position:absolute;left:1151.00px;top:479.32px;font:normal normal 10.014px/1 'Liberation Sans', sans-serif;color:#727272;white-space:nowrap;-webkit-text-stroke:0.25px currentColor;transform:scaleX(0.9700);transform-origin:0 0;">[Por defecto]</div>
<div style="position:absolute;left:1124.90px;top:506.67px;font:normal normal 9.602px/1 'Liberation Sans', sans-serif;color:#6f6f6f;white-space:nowrap;-webkit-text-stroke:0.25px currentColor;transform:scaleX(1.0323);transform-origin:0 0;">Ver: Resultado de calco</div>
<div style="position:absolute;left:1115.50px;top:532.24px;font:normal normal 10.700px/1 'Liberation Sans', sans-serif;color:#6f6f6f;white-space:nowrap;-webkit-text-stroke:0.25px currentColor;transform:scaleX(0.9426);transform-origin:0 0;">Modo: Blanco y negro</div>
<div style="position:absolute;left:1215.50px;top:641.40px;font:normal normal 9.328px/1 'Liberation Sans', sans-serif;color:#6f6f6f;white-space:nowrap;-webkit-text-stroke:0.25px currentColor;transform:scaleX(1.0093);transform-origin:0 0;">Colores:</div>
<div style="position:absolute;left:1254.00px;top:641.40px;font:normal normal 9.328px/1 'Liberation Sans', sans-serif;color:#6f6f6f;white-space:nowrap;-webkit-text-stroke:0.25px currentColor;transform:scaleX(1.1585);transform-origin:0 0;">0</div>
<div style="position:absolute;left:1120.00px;top:641.64px;font:normal normal 9.053px/1 'Liberation Sans', sans-serif;color:#6f6f6f;white-space:nowrap;-webkit-text-stroke:0.25px currentColor;transform:scaleX(1.1925);transform-origin:0 0;">0</div>
<div style="position:absolute;left:1120.00px;top:657.72px;font:normal normal 9.191px/1 'Liberation Sans', sans-serif;color:#6f6f6f;white-space:nowrap;-webkit-text-stroke:0.25px currentColor;transform:scaleX(1.1742);transform-origin:0 0;">0</div>
<div style="position:absolute;left:878.3px;top:222.7px;width:216.5px;height:136px;background:#353535;border-radius:3px 3px 0 0"></div>
<div style="position:absolute;left:879.3px;top:223.7px;width:214.5px;height:134px;background:#535353;border-radius:2px 2px 0 0"></div>
<div style="position:absolute;left:879.3px;top:223.7px;width:214.5px;height:11.5px;background:#434343;border-radius:2px 2px 0 0"></div>
<div style="position:absolute;left:879.3px;top:235.2px;width:214.5px;height:25.4px;background:#474747;"></div>
<div style="position:absolute;left:879.3px;top:235.2px;width:67px;height:25.4px;background:#535353;"></div>
<div style="position:absolute;left:887.00px;top:243.36px;font:normal normal 10.562px/1 'Liberation Sans', sans-serif;color:#f2f2f2;white-space:nowrap;-webkit-text-stroke:0.45px currentColor;transform:scaleX(0.8874);transform-origin:0 0;">Buscatrazos</div>
<div style="position:absolute;left:883.10px;top:269.14px;font:normal normal 9.877px/1 'Liberation Sans', sans-serif;color:#e0e0e0;white-space:nowrap;-webkit-text-stroke:0.25px currentColor;transform:scaleX(0.9557);transform-origin:0 0;">Modos de forma:</div>
<div style="position:absolute;left:883.10px;top:314.77px;font:normal normal 9.602px/1 'Liberation Sans', sans-serif;color:#e0e0e0;white-space:nowrap;-webkit-text-stroke:0.25px currentColor;transform:scaleX(0.9521);transform-origin:0 0;">Buscatrazos:</div>
<div style="position:absolute;left:1023.5px;top:286.3px;width:65.8px;height:17.5px;background:#515151;box-shadow:inset 0 0 0 1px #585858"></div>
<div style="position:absolute;left:1037.90px;top:290.79px;font:normal normal 10.288px/1 'Liberation Sans', sans-serif;color:#6b6b6b;white-space:nowrap;-webkit-text-stroke:0.25px currentColor;transform:scaleX(0.9033);transform-origin:0 0;">Expandir</div>
<svg style="left:0px;top:0px;" width="1280" height="684" viewBox="0 0 1280 684"><path d="M1069.3,228 L1066.8999999999999,230.2 L1069.3,232.4 M1073.1,228 L1070.7,230.2 L1073.1,232.4" fill="none" stroke="#d8d8d8" stroke-width="1.5"/><path d="M1084,227.2 L1089.8,233.0 M1089.8,227.2 L1084,233.0" stroke="#d8d8d8" stroke-width="1.6"/>
<g fill="#d0d0d0"><rect x="1078.8" y="245.7" width="10" height="1.3"/><rect x="1078.8" y="247.9" width="10" height="1.3"/><rect x="1078.8" y="250.1" width="10" height="1.3"/><rect x="1078.8" y="251.6" width="10" height="0.8"/></g>
<g>
<rect x="888.6" y="288.5" width="9" height="9" fill="#d0d0d0"/><rect x="893.5" y="293.3" width="9" height="9" fill="#d0d0d0"/>
<rect x="924.2" y="289" width="8.5" height="8.5" fill="#d0d0d0"/><rect x="928.5" y="293.3" width="8.5" height="8.5" fill="#535353" stroke="#d0d0d0" stroke-width="1.2"/>
<rect x="958.2" y="289" width="8.5" height="8.5" fill="none" stroke="#d0d0d0" stroke-width="1.2"/><rect x="962.8" y="293.3" width="8.5" height="8.5" fill="none" stroke="#d0d0d0" stroke-width="1.2"/><rect x="962.8" y="293.3" width="3.9" height="4.2" fill="#d0d0d0"/>
<rect x="993.3" y="288.8" width="8.5" height="8.5" fill="#d0d0d0"/><rect x="997.5" y="293.3" width="8.5" height="8.5" fill="#d0d0d0"/><rect x="997.5" y="293.3" width="4.3" height="4" fill="#535353"/>
</g>
<g>
<rect x="892" y="334.8" width="8.5" height="8.5" fill="none" stroke="#d0d0d0" stroke-width="1.2"/><rect x="896.3" y="339.2" width="8.5" height="8.5" fill="none" stroke="#d0d0d0" stroke-width="1.2"/><rect x="894.5" y="337.5" width="6" height="6" fill="#d0d0d0"/>
<rect x="926.5" y="334.8" width="8.5" height="8.5" fill="#d0d0d0"/><rect x="931" y="339.2" width="9" height="9" fill="#d0d0d0" stroke="#535353" stroke-width="0.9"/>
<rect x="961.2" y="334.8" width="8.5" height="8.5" fill="#d0d0d0"/><rect x="965.8" y="339.5" width="8.8" height="8.8" fill="#d0d0d0"/>
<rect x="995.8" y="334.8" width="8.5" height="8.5" fill="none" stroke="#9a9a9a" stroke-width="1"/><rect x="1000.2" y="339.2" width="8.5" height="8.5" fill="none" stroke="#d0d0d0" stroke-width="1.2"/><rect x="999" y="338" width="4" height="4" fill="#d0d0d0"/>
<rect x="1031.5" y="334.8" width="8.5" height="8.5" fill="none" stroke="#d0d0d0" stroke-width="1.2"/><rect x="1036" y="339.2" width="8.5" height="8.5" fill="none" stroke="#d0d0d0" stroke-width="1.2"/><rect x="1034.5" y="337.8" width="4.5" height="4.5" fill="none" stroke="#d0d0d0" stroke-width="1"/>
<rect x="1066.8" y="334.8" width="8.5" height="8.5" fill="#535353" stroke="#d0d0d0" stroke-width="1.3"/><path d="M1075.3,339.5 L1079.8,339.5 L1079.8,348 L1071.3,348 L1071.3,343.3 L1075.3,343.3Z" fill="#d0d0d0"/>
</g>
</svg>
<div style="position:absolute;left:1198.4px;top:102.5px;width:36.0px;height:103.0px;background:#3a3a3a;border-radius:3px 3px 0 0"></div>
<div style="position:absolute;left:1199.4px;top:103.5px;width:34.0px;height:101.0px;background:#535353;border-radius:2px 2px 0 0"></div>
<div style="position:absolute;left:1199.4px;top:103.5px;width:34.0px;height:10.700000000000003px;background:#454545;border-radius:2px 2px 0 0"></div>
<div style="position:absolute;left:1199.4px;top:113.2px;width:34.0px;height:1px;background:#3c3c3c;"></div>
<svg style="left:0px;top:0px;" width="1280" height="684" viewBox="0 0 1280 684"><path d="M1205.9,107.94999999999999 L1208.3000000000002,110.14999999999999 L1205.9,112.35 M1209.7,107.94999999999999 L1212.1000000000001,110.14999999999999 L1209.7,112.35" fill="none" stroke="#d8d8d8" stroke-width="1.5"/><path d="M1223.2,107.35 L1228.8,112.94999999999999 M1228.8,107.35 L1223.2,112.94999999999999" stroke="#d8d8d8" stroke-width="1.7"/><rect x="1207" y="118" width="1" height="3" fill="#3a3a3a"/><rect x="1209" y="118" width="1" height="3" fill="#3a3a3a"/><rect x="1211" y="118" width="1" height="3" fill="#3a3a3a"/><rect x="1213" y="118" width="1" height="3" fill="#3a3a3a"/><rect x="1215" y="118" width="1" height="3" fill="#3a3a3a"/><rect x="1217" y="118" width="1" height="3" fill="#3a3a3a"/><rect x="1219" y="118" width="1" height="3" fill="#3a3a3a"/><rect x="1221" y="118" width="1" height="3" fill="#3a3a3a"/><rect x="1223" y="118" width="1" height="3" fill="#3a3a3a"/><rect x="1225" y="118" width="1" height="3" fill="#3a3a3a"/></svg>
<svg style="left:0px;top:0px;" width="1280" height="684" viewBox="0 0 1280 684"><defs><linearGradient id="pg" x1="0" x2="1"><stop offset="0" stop-color="#4a4a4a"/><stop offset="1" stop-color="#b0b0b0"/></linearGradient><linearGradient id="qg" x1="0" x2="1"><stop offset="0" stop-color="#eeeeee"/><stop offset="1" stop-color="#5a5a5a"/></linearGradient></defs>
<rect x="1210" y="131.5" width="15.5" height="11" fill="url(#pg)" stroke="#d0d0d0" stroke-width="1.2"/>
<path d="M1210,157.5 L1214.5,155 L1219,157.5 L1219,162.5 L1214.5,165 L1210,162.5Z M1210,157.5 L1214.5,160 L1219,157.5 M1214.5,160 L1214.5,165" fill="none" stroke="#d0d0d0" stroke-width="1.5"/>
<rect x="1221.5" y="155" width="4" height="3.5" fill="#d0d0d0"/><rect x="1221.5" y="160" width="4" height="3.5" fill="#d0d0d0"/>
<rect x="1209.5" y="168" width="16.5" height="3.5" fill="#d0d0d0"/>
<path d="M1213.5,196.3 C1209.5,196.3 1207.8,193.5 1208,190.8 C1208.3,187.8 1210.8,186 1213.8,186.5 C1215.5,183.5 1218.5,182.8 1221,183.2 C1225,183.8 1227.8,187 1227.5,191 C1227.2,194.5 1224.5,196.3 1221.5,196.3Z" fill="#d0d0d0" stroke="#d0d0d0" stroke-width="1.4"/>
<path d="M1213.3,194.2 C1211.2,194.2 1210,192.6 1210.2,190.8 C1210.5,188.8 1212.3,187.9 1214,188.4 L1219.2,193.2 C1219.8,193.8 1220.5,194.2 1221.5,194.2 C1223.8,194.2 1225.3,192.6 1225.3,190.5 C1225.3,188.2 1223.3,186.2 1220.8,186.2 C1218.5,186.2 1216.8,187.7 1216,189.2" fill="none" stroke="#535353" stroke-width="1.4"/>
</svg>
<div style="position:absolute;left:1123.3px;top:178px;width:36.700000000000045px;height:51.400000000000006px;background:#3a3a3a;border-radius:3px 3px 0 0"></div>
<div style="position:absolute;left:1124.3px;top:179px;width:34.700000000000045px;height:49.400000000000006px;background:#535353;border-radius:2px 2px 0 0"></div>
<div style="position:absolute;left:1124.3px;top:179px;width:34.700000000000045px;height:11.5px;background:#454545;border-radius:2px 2px 0 0"></div>
<div style="position:absolute;left:1124.3px;top:189.5px;width:34.700000000000045px;height:1px;background:#3c3c3c;"></div>
<svg style="left:0px;top:0px;" width="1280" height="684" viewBox="0 0 1280 684"><path d="M1131.5,183.85 L1133.9,186.04999999999998 L1131.5,188.25 M1135.3,183.85 L1137.7,186.04999999999998 L1135.3,188.25" fill="none" stroke="#d8d8d8" stroke-width="1.5"/><path d="M1148.8,183.25 L1154.3999999999999,188.85 M1154.3999999999999,183.25 L1148.8,188.85" stroke="#d8d8d8" stroke-width="1.7"/><rect x="1133" y="195" width="1" height="3" fill="#3a3a3a"/><rect x="1135" y="195" width="1" height="3" fill="#3a3a3a"/><rect x="1137" y="195" width="1" height="3" fill="#3a3a3a"/><rect x="1139" y="195" width="1" height="3" fill="#3a3a3a"/><rect x="1141" y="195" width="1" height="3" fill="#3a3a3a"/><rect x="1143" y="195" width="1" height="3" fill="#3a3a3a"/><rect x="1145" y="195" width="1" height="3" fill="#3a3a3a"/><rect x="1147" y="195" width="1" height="3" fill="#3a3a3a"/><rect x="1149" y="195" width="1" height="3" fill="#3a3a3a"/><rect x="1151" y="195" width="1" height="3" fill="#3a3a3a"/></svg>
<svg style="left:0px;top:0px;" width="1280" height="684" viewBox="0 0 1280 684"><rect x="1134" y="204.8" width="9.5" height="11" fill="none" stroke="#d0d0d0" stroke-width="1.2"/><rect x="1139" y="210" width="11.5" height="11" fill="#535353" stroke="#d0d0d0" stroke-width="1.3"/><line x1="1139" y1="213.5" x2="1150.5" y2="213.5" stroke="#6a6a6a" stroke-width="1"/></svg>
<div style="position:absolute;left:1166px;top:290.2px;width:35.5px;height:77.5px;background:#3a3a3a;border-radius:3px 3px 0 0"></div>
<div style="position:absolute;left:1167px;top:291.2px;width:33.5px;height:75.5px;background:#535353;border-radius:2px 2px 0 0"></div>
<div style="position:absolute;left:1167px;top:291.2px;width:33.5px;height:11.0px;background:#454545;border-radius:2px 2px 0 0"></div>
<div style="position:absolute;left:1167px;top:301.2px;width:33.5px;height:1px;background:#3c3c3c;"></div>
<svg style="left:0px;top:0px;" width="1280" height="684" viewBox="0 0 1280 684"><path d="M1173.0,295.8 L1175.4,298.0 L1173.0,300.2 M1176.8,295.8 L1179.2,298.0 L1176.8,300.2" fill="none" stroke="#d8d8d8" stroke-width="1.5"/><path d="M1190.3,295.2 L1195.8999999999999,300.8 M1195.8999999999999,295.2 L1190.3,300.8" stroke="#d8d8d8" stroke-width="1.7"/><rect x="1175" y="306" width="1" height="3" fill="#3a3a3a"/><rect x="1177" y="306" width="1" height="3" fill="#3a3a3a"/><rect x="1179" y="306" width="1" height="3" fill="#3a3a3a"/><rect x="1181" y="306" width="1" height="3" fill="#3a3a3a"/><rect x="1183" y="306" width="1" height="3" fill="#3a3a3a"/><rect x="1185" y="306" width="1" height="3" fill="#3a3a3a"/><rect x="1187" y="306" width="1" height="3" fill="#3a3a3a"/><rect x="1189" y="306" width="1" height="3" fill="#3a3a3a"/><rect x="1191" y="306" width="1" height="3" fill="#3a3a3a"/><rect x="1193" y="306" width="1" height="3" fill="#3a3a3a"/></svg>
<svg style="left:0px;top:0px;" width="1280" height="684" viewBox="0 0 1280 684"><defs><linearGradient id="pg2" x1="0" x2="1"><stop offset="0" stop-color="#4a4a4a"/><stop offset="1" stop-color="#b0b0b0"/></linearGradient><linearGradient id="qg2" x1="0" x2="1"><stop offset="0" stop-color="#eeeeee"/><stop offset="1" stop-color="#5a5a5a"/></linearGradient></defs>
<path d="M1185,318 C1191,317.5 1195,320.5 1194.5,324 C1194,327 1191,326 1189.5,327.5 C1188,329 1189,330.5 1185,330.5 C1179.5,330.5 1176,328 1176,324.5 C1176,320.5 1180,318.2 1185,318Z" fill="#d0d0d0"/>
<circle cx="1181" cy="323" r="1.3" fill="#535353"/><circle cx="1180" cy="327" r="1.3" fill="#535353"/><circle cx="1184" cy="328" r="1.3" fill="#535353"/><circle cx="1190" cy="321.5" r="1.1" fill="#535353"/><circle cx="1188.5" cy="325" r="1.2" fill="#535353"/>
<path d="M1178.3,344 L1178.3,357.8 L1192.3,357.8 A14,14 0 0 0 1178.3,344Z" fill="url(#qg2)" stroke="#d0d0d0" stroke-width="1.1"/>
</svg>
<div style="position:absolute;left:1196.7px;top:422px;width:35.59999999999991px;height:50px;background:#3a3a3a;border-radius:3px 3px 0 0"></div>
<div style="position:absolute;left:1197.7px;top:423px;width:33.59999999999991px;height:48px;background:#535353;border-radius:2px 2px 0 0"></div>
<div style="position:absolute;left:1197.7px;top:423px;width:33.59999999999991px;height:10px;background:#454545;border-radius:2px 2px 0 0"></div>
<div style="position:absolute;left:1197.7px;top:432px;width:33.59999999999991px;height:1px;background:#3c3c3c;"></div>
<svg style="left:0px;top:0px;" width="1280" height="684" viewBox="0 0 1280 684"><path d="M1203.8,427.1 L1206.2,429.3 L1203.8,431.5 M1207.6,427.1 L1210.0,429.3 L1207.6,431.5" fill="none" stroke="#d8d8d8" stroke-width="1.5"/><path d="M1221.1,426.5 L1226.6999999999998,432.1 M1226.6999999999998,426.5 L1221.1,432.1" stroke="#d8d8d8" stroke-width="1.7"/><rect x="1206" y="437" width="1" height="3" fill="#3a3a3a"/><rect x="1208" y="437" width="1" height="3" fill="#3a3a3a"/><rect x="1210" y="437" width="1" height="3" fill="#3a3a3a"/><rect x="1212" y="437" width="1" height="3" fill="#3a3a3a"/><rect x="1214" y="437" width="1" height="3" fill="#3a3a3a"/><rect x="1216" y="437" width="1" height="3" fill="#3a3a3a"/><rect x="1218" y="437" width="1" height="3" fill="#3a3a3a"/><rect x="1220" y="437" width="1" height="3" fill="#3a3a3a"/><rect x="1222" y="437" width="1" height="3" fill="#3a3a3a"/></svg>
<svg style="left:0px;top:0px;" width="1280" height="684" viewBox="0 0 1280 684">
<path d="M1215.8,448.6 L1224.3,453 L1215.8,457.4 L1207.3,453Z" fill="#e0e0e0"/>
<path d="M1209.2,456.5 L1207.3,457.5 L1215.8,462 L1224.3,457.5 L1222.4,456.5 L1215.8,460Z" fill="#e0e0e0"/>
</svg>
<div style="position:absolute;left:1137.8px;top:485.6px;width:35.100000000000136px;height:89.39999999999998px;background:#3a3a3a;border-radius:3px 3px 0 0"></div>
<div style="position:absolute;left:1138.8px;top:486.6px;width:33.100000000000136px;height:87.39999999999998px;background:#535353;border-radius:2px 2px 0 0"></div>
<div style="position:absolute;left:1138.8px;top:486.6px;width:33.100000000000136px;height:10.699999999999989px;background:#454545;border-radius:2px 2px 0 0"></div>
<div style="position:absolute;left:1138.8px;top:496.3px;width:33.100000000000136px;height:1px;background:#3c3c3c;"></div>
<svg style="left:0px;top:0px;" width="1280" height="684" viewBox="0 0 1280 684"><path d="M1144.4,491.05000000000007 L1146.8000000000002,493.25000000000006 L1144.4,495.45000000000005 M1148.2,491.05000000000007 L1150.6000000000001,493.25000000000006 L1148.2,495.45000000000005" fill="none" stroke="#d8d8d8" stroke-width="1.5"/><path d="M1161.7,490.45000000000005 L1167.3,496.05000000000007 M1167.3,490.45000000000005 L1161.7,496.05000000000007" stroke="#d8d8d8" stroke-width="1.7"/><rect x="1146" y="502" width="1" height="3" fill="#3a3a3a"/><rect x="1148" y="502" width="1" height="3" fill="#3a3a3a"/><rect x="1150" y="502" width="1" height="3" fill="#3a3a3a"/><rect x="1152" y="502" width="1" height="3" fill="#3a3a3a"/><rect x="1154" y="502" width="1" height="3" fill="#3a3a3a"/><rect x="1156" y="502" width="1" height="3" fill="#3a3a3a"/><rect x="1158" y="502" width="1" height="3" fill="#3a3a3a"/><rect x="1160" y="502" width="1" height="3" fill="#3a3a3a"/><rect x="1162" y="502" width="1" height="3" fill="#3a3a3a"/><rect x="1164" y="502" width="1" height="3" fill="#3a3a3a"/></svg>
<svg style="left:0px;top:0px;" width="1280" height="684" viewBox="0 0 1280 684">
<rect x="1147.6" y="514.8" width="16" height="10.6" fill="#d0d0d0"/>
<g fill="#535353"><rect x="1148.8" y="516" width="4" height="3.5"/><rect x="1153.8" y="516" width="3.5" height="3.5"/><rect x="1158.5" y="516" width="4" height="3.5"/><rect x="1148.8" y="520.7" width="4" height="3.5"/><rect x="1153.8" y="520.7" width="3.5" height="3.5"/></g>
<g fill="#a8a8a8"><rect x="1149.5" y="516.8" width="2.5" height="2"/><rect x="1159.2" y="521.4" width="2.5" height="2"/></g>
<path d="M1150,546 L1158.5,546 L1157.5,555 L1151,555Z" fill="#d0d0d0"/>
<path d="M1151.5,546 L1150,539 M1154,546 L1154,537 M1156.5,546 L1159,540" stroke="#d0d0d0" stroke-width="1.3"/>
<circle cx="1150" cy="538.5" r="1.8" fill="#d0d0d0"/><circle cx="1154" cy="537" r="1.6" fill="#d0d0d0"/><path d="M1158,540.5 C1159,537.5 1163,537.5 1163.5,539.5Z" fill="#d0d0d0"/>
</svg>
<div style="position:absolute;left:1120px;top:561px;width:104.29999999999995px;height:77px;background:#3a3a3a;border-radius:3px 3px 0 0"></div>
<div style="position:absolute;left:1121px;top:562px;width:102.29999999999995px;height:75px;background:#535353;border-radius:2px 2px 0 0"></div>
<div style="position:absolute;left:1121px;top:562px;width:102.29999999999995px;height:12px;background:#454545;border-radius:2px 2px 0 0"></div>
<div style="position:absolute;left:1121px;top:573px;width:102.29999999999995px;height:1px;background:#3c3c3c;"></div>
<svg style="left:0px;top:0px;" width="1280" height="684" viewBox="0 0 1280 684"><path d="M1195.8,567.1 L1198.2,569.3000000000001 L1195.8,571.5 M1199.6,567.1 L1202.0,569.3000000000001 L1199.6,571.5" fill="none" stroke="#d8d8d8" stroke-width="1.5"/><path d="M1213.1,566.5 L1218.6999999999998,572.1 M1218.6999999999998,566.5 L1213.1,572.1" stroke="#d8d8d8" stroke-width="1.7"/><rect x="1163" y="578" width="1" height="3" fill="#3a3a3a"/><rect x="1165" y="578" width="1" height="3" fill="#3a3a3a"/><rect x="1167" y="578" width="1" height="3" fill="#3a3a3a"/><rect x="1169" y="578" width="1" height="3" fill="#3a3a3a"/><rect x="1171" y="578" width="1" height="3" fill="#3a3a3a"/><rect x="1173" y="578" width="1" height="3" fill="#3a3a3a"/><rect x="1175" y="578" width="1" height="3" fill="#3a3a3a"/><rect x="1177" y="578" width="1" height="3" fill="#3a3a3a"/><rect x="1179" y="578" width="1" height="3" fill="#3a3a3a"/><rect x="1181" y="578" width="1" height="3" fill="#3a3a3a"/></svg>
<div style="position:absolute;left:1125.9px;top:611.8px;width:93.1px;height:19.7px;background:#383838;"></div>
<svg style="left:0px;top:0px;" width="1280" height="684" viewBox="0 0 1280 684">
<rect x="1133" y="590.5" width="11" height="11" fill="none" stroke="#d0d0d0" stroke-width="1" stroke-dasharray="1.5,1.2"/>
<g fill="#e0e0e0"><rect x="1131.5" y="589" width="3" height="3"/><rect x="1142.5" y="589" width="3" height="3"/><rect x="1131.5" y="600.5" width="3" height="3"/><rect x="1142.5" y="600.5" width="3" height="3"/><rect x="1137" y="589" width="3" height="2.5"/><rect x="1137" y="601" width="3" height="2.5"/><rect x="1131.5" y="594.8" width="2.5" height="3"/><rect x="1143" y="594.8" width="2.5" height="3"/><rect x="1137.5" y="595.5" width="1.6" height="1.6"/></g>
<rect x="1131.2" y="613.5" width="1.3" height="16" fill="#d0d0d0"/>
<rect x="1134.5" y="615.5" width="6.5" height="4.5" fill="#d0d0d0"/><rect x="1134.5" y="622" width="11" height="5" fill="#d0d0d0"/>
</svg>
<div style="position:absolute;left:1155.20px;top:591.56px;font:normal normal 9.739px/1 'Liberation Sans', sans-serif;color:#f0f0f0;white-space:nowrap;-webkit-text-stroke:0.45px currentColor;transform:scaleX(1.0236);transform-origin:0 0;">Transformar</div>
<div style="position:absolute;left:1155.20px;top:617.90px;font:normal normal 9.328px/1 'Liberation Sans', sans-serif;color:#f0f0f0;white-space:nowrap;-webkit-text-stroke:0.45px currentColor;transform:scaleX(1.0798);transform-origin:0 0;">Alinear</div>
<div style="position:absolute;left:902.6px;top:541.5px;width:216.8px;height:132.5px;background:#353535;border-radius:2px 2px 0 0"></div>
<div style="position:absolute;left:903.6px;top:542.5px;width:214.8px;height:130.5px;background:#535353;"></div>
<div style="position:absolute;left:903.6px;top:542.5px;width:214.8px;height:27.4px;background:#474747;"></div>
<div style="position:absolute;left:903.6px;top:542.5px;width:70.3px;height:2.5px;background:#3a3a3a;"></div>
<div style="position:absolute;left:975px;top:545px;width:53px;height:25px;background:#535353;"></div>
<div style="position:absolute;left:911.50px;top:553.10px;font:normal normal 9.328px/1 'Liberation Sans', sans-serif;color:#a0a0a0;white-space:nowrap;-webkit-text-stroke:0.45px currentColor;transform:scaleX(1.0662);transform-origin:0 0;">Transformar</div>
<div style="position:absolute;left:988.20px;top:553.10px;font:normal normal 9.328px/1 'Liberation Sans', sans-serif;color:#f2f2f2;white-space:nowrap;-webkit-text-stroke:0.45px currentColor;transform:scaleX(1.0867);transform-origin:0 0;">Alinear</div>
<div style="position:absolute;left:907.10px;top:578.65px;font:normal normal 8.916px/1 'Liberation Sans', sans-serif;color:#e2e2e2;white-space:nowrap;-webkit-text-stroke:0.25px currentColor;transform:scaleX(1.0702);transform-origin:0 0;">Alinear objetos:</div>
<div style="position:absolute;left:907.10px;top:630.87px;font:normal normal 9.602px/1 'Liberation Sans', sans-serif;color:#e2e2e2;white-space:nowrap;-webkit-text-stroke:0.25px currentColor;transform:scaleX(1.0039);transform-origin:0 0;">Distribuir objetos:</div>
<svg style="left:0px;top:0px;" width="1280" height="684" viewBox="0 0 1280 684">
<path d="M979.2,555.5 L981.6,553 L984,555.5 M979.2,558.5 L981.6,561 L984,558.5" fill="none" stroke="#d8d8d8" stroke-width="1.1"/>
<path d="M1081,556 L1083.8,558.2 L1081,560.4 M1085.5,556 L1088.3,558.2 L1085.5,560.4" fill="none" stroke="#e6e6e6" stroke-width="1.5"/>
<rect x="1096.3" y="553" width="1" height="9.2" fill="#aaaaaa"/>
<g fill="#d8d8d8"><rect x="1103.7" y="554" width="9.6" height="1.2"/><rect x="1103.7" y="556.2" width="9.6" height="1.2"/><rect x="1103.7" y="558.4" width="9.6" height="1.2"/><rect x="1103.7" y="559.8" width="9.6" height="0.9"/></g>
<g fill="#d2d2d2">
<rect x="912.2" y="596.4" width="1.2" height="17"/><rect x="915" y="598.5" width="7" height="5" fill="#d2d2d2"/><rect x="915" y="606" width="12.2" height="5.5"/>
<rect x="952.2" y="596.4" width="1.2" height="17"/><rect x="948.8" y="598.5" width="8" height="5"/><rect x="946.2" y="606" width="13" height="5.5"/>
<rect x="994" y="596.4" width="1.2" height="17"/><rect x="985.5" y="598.5" width="7" height="5"/><rect x="980.4" y="606" width="12.2" height="5.5"/>
<rect x="1025.7" y="596.4" width="17.3" height="1.2"/><rect x="1028" y="599" width="5.3" height="14"/><rect x="1035" y="599" width="5.5" height="8"/>
<rect x="1059.5" y="604.5" width="17.4" height="1.2"/><rect x="1062" y="597.5" width="5.5" height="15"/><rect x="1069.5" y="600" width="5.5" height="9.5"/>
<rect x="1093.2" y="612.2" width="17.4" height="1.2"/><rect x="1095.5" y="597" width="5.5" height="14"/><rect x="1102.5" y="603" width="5.5" height="8"/>
</g>
<rect x="905" y="623" width="212" height="1" fill="#4a4a4a"/>
<g fill="#d2d2d2">
<rect x="911.5" y="648.7" width="17" height="1.2"/><rect x="915" y="651.5" width="10" height="4.5"/><rect x="911.5" y="657.5" width="17" height="1.2"/><rect x="913.5" y="660" width="13" height="5.7"/>
<rect x="945.5" y="653" width="4" height="1.2"/><rect x="950" y="650" width="9.5" height="5"/><rect x="959.5" y="653" width="4" height="1.2"/><rect x="945.5" y="661.5" width="2.5" height="1.2"/><rect x="947.5" y="659" width="13" height="5.5"/><rect x="960.5" y="661.5" width="3" height="1.2"/>
<rect x="980.5" y="664.5" width="17" height="1.2"/><rect x="984" y="649" width="10" height="4.5"/><rect x="980.5" y="655.2" width="17" height="1.2"/><rect x="982.5" y="657.5" width="13" height="5.7"/>
<rect x="1025.7" y="648.7" width="1.2" height="17"/><rect x="1028.7" y="650.5" width="5.5" height="13.5"/><rect x="1036" y="648.7" width="1.2" height="17"/><rect x="1038.5" y="653" width="4.5" height="8.5"/>
<rect x="1065" y="648.7" width="1.2" height="17"/><rect x="1062" y="651" width="5.5" height="12.5"/><rect x="1073.5" y="648.7" width="1.2" height="17"/><rect x="1070.5" y="653" width="5.5" height="8.5"/>
<rect x="1093.5" y="650.5" width="5.5" height="13.5"/><rect x="1101" y="648.7" width="1.2" height="17"/><rect x="1103.5" y="653" width="4.5" height="8.5"/><rect x="1109.5" y="648.7" width="1.2" height="17"/>
</g>
</svg>
<div style="position:absolute;left:73.7px;top:667.4px;width:46.1px;height:14.6px;background:#474747;"></div>
<div style="position:absolute;left:76.10px;top:671.64px;font:normal normal 9.877px/1 'Liberation Sans', sans-serif;color:#ececec;white-space:nowrap;-webkit-text-stroke:0.25px currentColor;transform:scaleX(0.9359);transform-origin:0 0;">100%</div>
<div style="position:absolute;left:121px;top:667.4px;width:15.4px;height:14.6px;background:#4d4d4d;"></div>
<svg style="left:123.5px;top:673px;" width="10" height="7" viewBox="0 0 10 7"><polyline points="1.5,1.5 5,5 8.5,1.5" fill="none" stroke="#e8e8e8" stroke-width="1.6"/></svg>
<div style="position:absolute;left:138px;top:667.4px;width:36.8px;height:14.6px;background:#515151;"></div>
<svg style="left:0px;top:0px;" width="1280" height="684" viewBox="0 0 1280 684"><g fill="#6c6c6c"><rect x="145.5" y="669.5" width="1.3" height="9"/><polygon points="153.5,669.5 153.5,678.5 147.5,674"/><polygon points="167,669.5 167,678.5 161.5,674"/></g></svg>
<div style="position:absolute;left:177.7px;top:667.4px;width:36.1px;height:14.6px;background:#474747;"></div>
<div style="position:absolute;left:179.80px;top:671.64px;font:normal normal 9.877px/1 'Liberation Sans', sans-serif;color:#ececec;white-space:nowrap;-webkit-text-stroke:0.25px currentColor;transform:scaleX(0.7477);transform-origin:0 0;">1</div>
<div style="position:absolute;left:215.5px;top:667.4px;width:14.5px;height:14.6px;background:#4d4d4d;"></div>
<svg style="left:217.5px;top:673px;" width="10" height="7" viewBox="0 0 10 7"><polyline points="1.5,1.5 5,5 8.5,1.5" fill="none" stroke="#e8e8e8" stroke-width="1.6"/></svg>
<div style="position:absolute;left:231.8px;top:667.4px;width:37px;height:14.6px;background:#515151;"></div>
<svg style="left:0px;top:0px;" width="1280" height="684" viewBox="0 0 1280 684"><g fill="#6c6c6c"><polygon points="240.5,669.5 240.5,678.5 246,674"/><polygon points="256.5,669.5 256.5,678.5 262,674"/><rect x="262.5" y="669.5" width="1.3" height="9"/></g></svg>
<div style="position:absolute;left:271.7px;top:667.4px;width:186.3px;height:14.6px;background:#505050;"></div>
<div style="position:absolute;left:344.30px;top:670.13px;font:normal normal 11.660px/1 'Liberation Sans', sans-serif;color:#c8c8c8;white-space:nowrap;-webkit-text-stroke:0.25px currentColor;transform:scaleX(0.7756);transform-origin:0 0;">Selección</div>
<svg style="left:0px;top:0px;" width="1280" height="684" viewBox="0 0 1280 684"><polygon points="464,669.5 464,678.5 470,674" fill="#dcdcdc"/><polyline points="484,670.5 480.5,674 484,677.5" fill="none" stroke="#8a8a8a" stroke-width="1.2"/></svg>
<div style="position:absolute;left:490px;top:667px;width:412px;height:15px;background:#505050;"></div>
<div style="position:absolute;left:861.6px;top:668.5px;width:24px;height:12px;background:#5e5e5e;border-radius:6px"></div>
</body></html>
